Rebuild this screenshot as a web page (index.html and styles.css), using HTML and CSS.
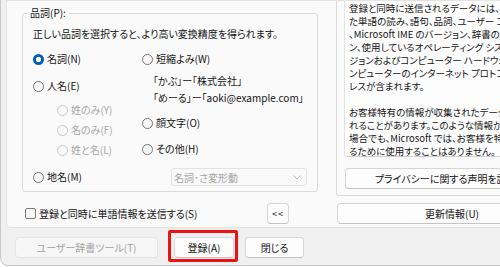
FILE: index.html
```html
<!DOCTYPE html>
<html lang="ja">
<head>
<meta charset="utf-8">
<title>単語の登録</title>
<link rel="stylesheet" href="styles.css">
</head>
<body>
<div class="dialog">
  <div class="card">
    <fieldset class="group">
      <legend>品詞(P):</legend>
      <p class="desc">正しい品詞を選択すると、より高い変換精度を得られます。</p>
      <div class="cols">
        <div class="col col-left">
          <div class="opt"><span class="rb on"></span>名詞(N)</div>
          <div class="opt gap-lg"><span class="rb"></span>人名(E)</div>
          <div class="subs">
            <div class="opt disabled"><span class="rb"></span>姓のみ(Y)</div>
            <div class="opt disabled"><span class="rb"></span>名のみ(F)</div>
            <div class="opt disabled"><span class="rb"></span>姓と名(L)</div>
          </div>
          <div class="opt gap-lg"><span class="rb"></span>地名(M)</div>
        </div>
        <div class="col col-right">
          <div class="opt"><span class="rb"></span>短縮よみ(W)</div>
          <div class="examples">
            <div>「かぶ」ー「株式会社」</div>
            <div>「めーる」ー「aoki@example.com」</div>
          </div>
          <div class="opt gap-md"><span class="rb"></span>顔文字(O)</div>
          <div class="opt gap-lg2"><span class="rb"></span>その他(H)</div>
          <div class="select">
            <span>名詞･さ変形動</span>
            <svg class="chev" width="8" height="5" viewBox="0 0 8 5"><polyline points="0.5,0.5 4,4 7.5,0.5" fill="none" stroke="#b4b4b4" stroke-width="1"/></svg>
          </div>
        </div>
      </div>
    </fieldset>

    <div class="privacy">
      <div class="notice">
        登録と同時に送信されるデータには、登録され<br>
        た単語の読み、語句、品詞、ユーザー コメント<br>
        、Microsoft IME のバージョン、辞書のバージョ<br>
        ン、使用しているオペレーティング システムのバー<br>
        ジョンおよびコンピューター ハードウェアの情報、お使いのコ<br>
        ンピューターのインターネット プロトコル (IP) アド<br>
        レスが含まれます。<br>
        <br>
        お客様特有の情報が収集されたデータが使用さ<br>
        れることがあります。このような情報が含まれていた<br>
        場合でも、Microsoft では、お客様を特定す<br>
        るために使用することはありません。
      </div>
      <button class="btn privacy-btn">プライバシーに関する声明を読む(R)</button>
    </div>

    <div class="send-row">
      <span class="cb"></span>
      <span class="send-label">登録と同時に単語情報を送信する(S)</span>
      <button class="btn less">&lt;&lt;</button>
    </div>
    <div class="update-row">
      <button class="btn update-btn">更新情報(U)</button>
    </div>
  </div>

  <div class="footer">
    <button class="btn tool-btn" disabled>ユーザー辞書ツール(T)</button>
    <span class="highlight"><button class="btn ok-btn">登録(A)</button></span>
    <button class="btn close-btn">閉じる</button>
  </div>
</div>
</body>
</html>
```

FILE: styles.css
```css
* { box-sizing: border-box; }

html, body {
  margin: 0;
  padding: 0;
  background: #ffffff;
  overflow: hidden;
}

body {
  width: 500px;
  height: 267px;
  font-family: "Noto Sans CJK JP", "Noto Sans", sans-serif;
  font-size: 10px;
  font-feature-settings: "palt" 1;
  color: #141414;
}

.dialog {
  width: 640px;
  height: 266px;
  background: #f0f0f0;
  border-left: 1px solid #c9c9c9;
  border-bottom: 1px solid #c9c9c9;
  border-bottom-left-radius: 8px;
  display: flex;
  flex-direction: column;
}

.card {
  margin-left: 5px;
  height: 228px;
  flex: none;
  background: #fafafa;
  border: 1px solid #e3e3e3;
  border-right: none;
  border-bottom-left-radius: 5px;
  padding-left: 15px;
  display: grid;
  grid-template-columns: 296px 240px;
  grid-template-rows: 195px 21px;
  column-gap: 18px;
  row-gap: 7px;
  align-items: start;
}

/* ---- left group box ---- */
.group {
  margin: 5px 0 0;
  padding: 7px 9px 5px 10px;
  height: 186px;
  min-width: 0;
  border: 1px solid #dadada;
  border-radius: 3px;
}

.group legend {
  margin-left: -6px;
  padding: 0 3px;
  line-height: 14px;
}

.desc {
  margin: 0;
  line-height: 14px;
  white-space: nowrap;
}

.cols {
  margin-top: 11px;
  display: grid;
  grid-template-columns: 109px 1fr;
}

.col {
  display: flex;
  flex-direction: column;
}

.opt {
  display: flex;
  align-items: center;
  gap: 3px;
  height: 14px;
  line-height: 14px;
  white-space: nowrap;
}

.rb {
  flex: none;
  width: 11px;
  height: 11px;
  border-radius: 50%;
  border: 1px solid #767676;
  background: #f7f7f7;
}

.rb.on {
  border: none;
  background: radial-gradient(circle at center, #ffffff 0 2.4px, #005fb8 3px);
}

.opt.disabled { color: #a6a6a6; }
.opt.disabled .rb { border-color: #c6c6c6; background: #fbfbfb; }

.gap-lg { margin-top: 13px; }
.gap-md { margin-top: 11px; }
.gap-lg2 { margin-top: 12px; }

.subs {
  margin-top: 10px;
  padding-left: 24px;
  display: flex;
  flex-direction: column;
  gap: 6px;
}

.examples {
  margin-top: 8px;
  padding-left: 11px;
  display: flex;
  flex-direction: column;
  gap: 3px;
  line-height: 14px;
  white-space: nowrap;
}

.select {
  margin: 12px 0 0 29px;
  width: 136px;
  height: 18px;
  border: 1px solid #e2e2e2;
  border-radius: 3px;
  background: #f9f9f9;
  color: #a3a3a3;
  display: flex;
  align-items: center;
  justify-content: space-between;
  padding: 0 5px 0 2px;
}

.chev { display: block; }

/* ---- right group box ---- */
.privacy {
  height: 195px;
  border-left: 1px solid #dadada;
  border-bottom: 1px solid #dadada;
  border-bottom-left-radius: 3px;
  padding-left: 7px;
  display: flex;
  flex-direction: column;
}

.notice {
  height: 156px;
  flex: none;
  background: #fdfdfd;
  border-left: 1px solid #e3e3e3;
  border-bottom: 1px solid #cfcfcf;
  border-bottom-left-radius: 3px;
  padding: 1px 0 0 4px;
  font-size: 9.5px;
  line-height: 13px;
  white-space: nowrap;
  overflow: hidden;
}

/* ---- buttons ---- */
.btn {
  font: inherit;
  color: #141414;
  height: 21px;
  padding: 0;
  border: 1px solid #d6d6d6;
  border-bottom-color: #c3c3c3;
  border-radius: 4px;
  background: #fdfdfd;
  display: flex;
  align-items: center;
  justify-content: center;
  white-space: nowrap;
}

.privacy-btn {
  margin: 11px 0 0 1px;
  width: 214px;
}

.send-row {
  display: flex;
  align-items: center;
  height: 21px;
  padding-left: 3px;
}

.cb {
  flex: none;
  width: 11px;
  height: 11px;
  border: 1px solid #7a7a7a;
  border-radius: 2px;
  background: #f7f7f7;
}

.send-label {
  margin-left: 3px;
  white-space: nowrap;
}

.less {
  margin-left: auto;
  margin-right: 29px;
  width: 22px;
  font-size: 9px;
  letter-spacing: 1px;
}

.update-row { display: flex; }

.update-btn {
  margin-left: 1px;
  width: 230px;
}

/* ---- footer ---- */
.footer {
  display: flex;
  align-items: flex-start;
  padding: 9px 0 0 14px;
}

.tool-btn {
  width: 143px;
  background: #f6f6f6;
  border-color: #e4e4e4;
  color: #a3a3a3;
}

.highlight {
  position: relative;
  margin-left: 16px;
}

.highlight::after {
  content: "";
  position: absolute;
  top: -7px;
  right: -4px;
  bottom: -4px;
  left: -6px;
  border: 3px solid #ee1111;
  border-radius: 2px;
}

.ok-btn { width: 60px; }

.close-btn {
  margin-left: 11px;
  width: 59px;
}
```
